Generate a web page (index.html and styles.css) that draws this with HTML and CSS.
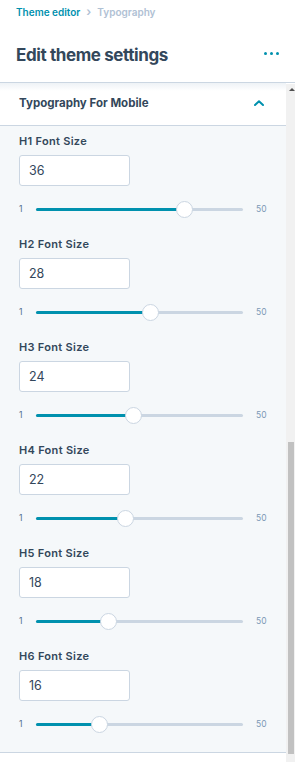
FILE: index.html
```html
<!DOCTYPE html>
<html lang="en">
<head>
    <meta charset="UTF-8">
    <meta name="viewport" content="width=device-width, initial-scale=1.0">
    <title>Edit theme settings</title>
    <link rel="stylesheet" href="styles.css">
</head>
<body>

    <div class="header">
        <div class="crumbs">
            <a class="crumb-link" href="#">Theme editor</a>
            <span class="crumb-sep">&rsaquo;</span>
            <span class="crumb-current">Typography</span>
        </div>
        <div class="title-row">
            <h1 class="title">Edit theme settings</h1>
            <span class="more"><i></i><i></i><i></i></span>
        </div>
    </div>

    <div class="main">
        <div class="panel">
            <div class="section-head">
                <span>Typography For Mobile</span>
                <svg class="chevron" width="10" height="6" viewBox="0 0 10 6">
                    <path d="M1 5 L5 1.3 L9 5" fill="none" stroke="#0091ae" stroke-width="2" stroke-linecap="round" stroke-linejoin="round"/>
                </svg>
            </div>

            <div class="section-body">
                <div class="field">
                    <div class="label">H1 Font Size</div>
                    <input class="num" type="text" value="36">
                    <div class="range">
                        <span class="min">1</span>
                        <div class="track">
                            <div class="fill" style="width: 71.4%"></div>
                            <div class="thumb" style="left: 71.4%"></div>
                        </div>
                        <span class="max">50</span>
                    </div>
                </div>

                <div class="field">
                    <div class="label">H2 Font Size</div>
                    <input class="num" type="text" value="28">
                    <div class="range">
                        <span class="min">1</span>
                        <div class="track">
                            <div class="fill" style="width: 55.1%"></div>
                            <div class="thumb" style="left: 55.1%"></div>
                        </div>
                        <span class="max">50</span>
                    </div>
                </div>

                <div class="field">
                    <div class="label">H3 Font Size</div>
                    <input class="num" type="text" value="24">
                    <div class="range">
                        <span class="min">1</span>
                        <div class="track">
                            <div class="fill" style="width: 46.9%"></div>
                            <div class="thumb" style="left: 46.9%"></div>
                        </div>
                        <span class="max">50</span>
                    </div>
                </div>

                <div class="field">
                    <div class="label">H4 Font Size</div>
                    <input class="num" type="text" value="22">
                    <div class="range">
                        <span class="min">1</span>
                        <div class="track">
                            <div class="fill" style="width: 42.9%"></div>
                            <div class="thumb" style="left: 42.9%"></div>
                        </div>
                        <span class="max">50</span>
                    </div>
                </div>

                <div class="field">
                    <div class="label">H5 Font Size</div>
                    <input class="num" type="text" value="18">
                    <div class="range">
                        <span class="min">1</span>
                        <div class="track">
                            <div class="fill" style="width: 34.7%"></div>
                            <div class="thumb" style="left: 34.7%"></div>
                        </div>
                        <span class="max">50</span>
                    </div>
                </div>

                <div class="field">
                    <div class="label">H6 Font Size</div>
                    <input class="num" type="text" value="16">
                    <div class="range">
                        <span class="min">1</span>
                        <div class="track">
                            <div class="fill" style="width: 30.6%"></div>
                            <div class="thumb" style="left: 30.6%"></div>
                        </div>
                        <span class="max">50</span>
                    </div>
                </div>
            </div>
            <div class="panel-foot"></div>
        </div>

        <div class="scrollbar">
            <div class="scroll-arrow"></div>
            <div class="scroll-thumb"></div>
        </div>
    </div>

</body>
</html>
```

FILE: styles.css
```css
/* page */
body {
    margin: 0;
    background-color: #fff;
    font-family: Inter, "Open Sans", sans-serif;
    color: #33475b;
    width: 295px;
    height: 762px;
    overflow: hidden;
}

/* header */
.header {
    padding: 6px 16px 15px 16px;
    border-bottom: 1px solid #cbd6e2;
    height: 61px;
}
.crumbs {
    font-size: 10px;
    font-weight: 600;
    line-height: 12px;
    display: flex;
    align-items: center;
    gap: 6px;
}
.crumb-link {
    color: #0091ae;
    text-decoration: none;
}
.crumb-sep {
    color: #b0c1d4;
    font-size: 12px;
}
.crumb-current {
    color: #b0c1d4;
}
.title-row {
    margin-top: 25px;
    display: flex;
    justify-content: space-between;
    align-items: center;
}
.title {
    margin: 0;
    font-size: 17px;
    font-weight: 700;
    letter-spacing: -0.4px;
    line-height: 24px;
}
.more {
    display: flex;
    gap: 3px;
    margin-top: -4px;
}
.more i {
    width: 3px;
    height: 3px;
    border-radius: 50%;
    background-color: #0091ae;
}

/* panel + scrollbar */
.main {
    display: flex;
    height: 679px;
}
.panel {
    flex: 1;
    display: flex;
    flex-direction: column;
}
.section-head {
    height: 31px;
    padding: 11px 22px 0 19px;
    border-bottom: 1px solid #cbd6e2;
    background: linear-gradient(#eef2f6, #fff 8px);
    display: flex;
    justify-content: space-between;
    font-size: 11.5px;
    font-weight: 700;
    line-height: 18px;
}
.chevron {
    margin-top: 6px;
}
.section-body {
    background-color: #f5f8fa;
    padding: 0 0 8px 19px;
    border-bottom: 1px solid #cbd6e2;
}
.field {
    padding: 8px 0 11px 0;
}
.label {
    font-size: 11px;
    font-weight: 600;
    letter-spacing: 0.3px;
    line-height: 14px;
}
.num {
    display: block;
    box-sizing: border-box;
    margin-top: 7px;
    width: 111px;
    height: 31px;
    padding: 0 9px;
    border: 1px solid #cbd6e2;
    border-radius: 3px;
    background-color: #fff;
    font-family: inherit;
    font-size: 12.5px;
    color: #33475b;
}
.range {
    margin-top: 14px;
    height: 18px;
    display: flex;
    align-items: center;
    font-size: 8.5px;
}
.min {
    width: 17px;
    color: #516f90;
}
.max {
    margin-left: 13px;
    color: #7c98b6;
}
.track {
    position: relative;
    width: 207px;
    height: 3px;
    border-radius: 2px;
    background-color: #cbd6e2;
}
.fill {
    height: 3px;
    border-radius: 2px;
    background-color: #0091ae;
}
.thumb {
    position: absolute;
    top: -7px;
    width: 15px;
    height: 15px;
    margin-left: -8px;
    border: 1px solid #cbd6e2;
    border-radius: 50%;
    background-color: #fff;
}
.panel-foot {
    flex: 1;
    background-color: #fff;
}

.scrollbar {
    width: 9px;
    margin-top: 1px;
    background-color: #f1f1f1;
    display: flex;
    flex-direction: column;
}
.scroll-arrow {
    width: 0;
    height: 0;
    margin: 4px 0 0 3px;
    border-left: 3px solid transparent;
    border-right: 3px solid transparent;
    border-bottom: 3px solid #505050;
}
.scroll-thumb {
    margin: 351px 1px 0 2px;
    height: 312px;
    background-color: #c1c1c1;
}
```
